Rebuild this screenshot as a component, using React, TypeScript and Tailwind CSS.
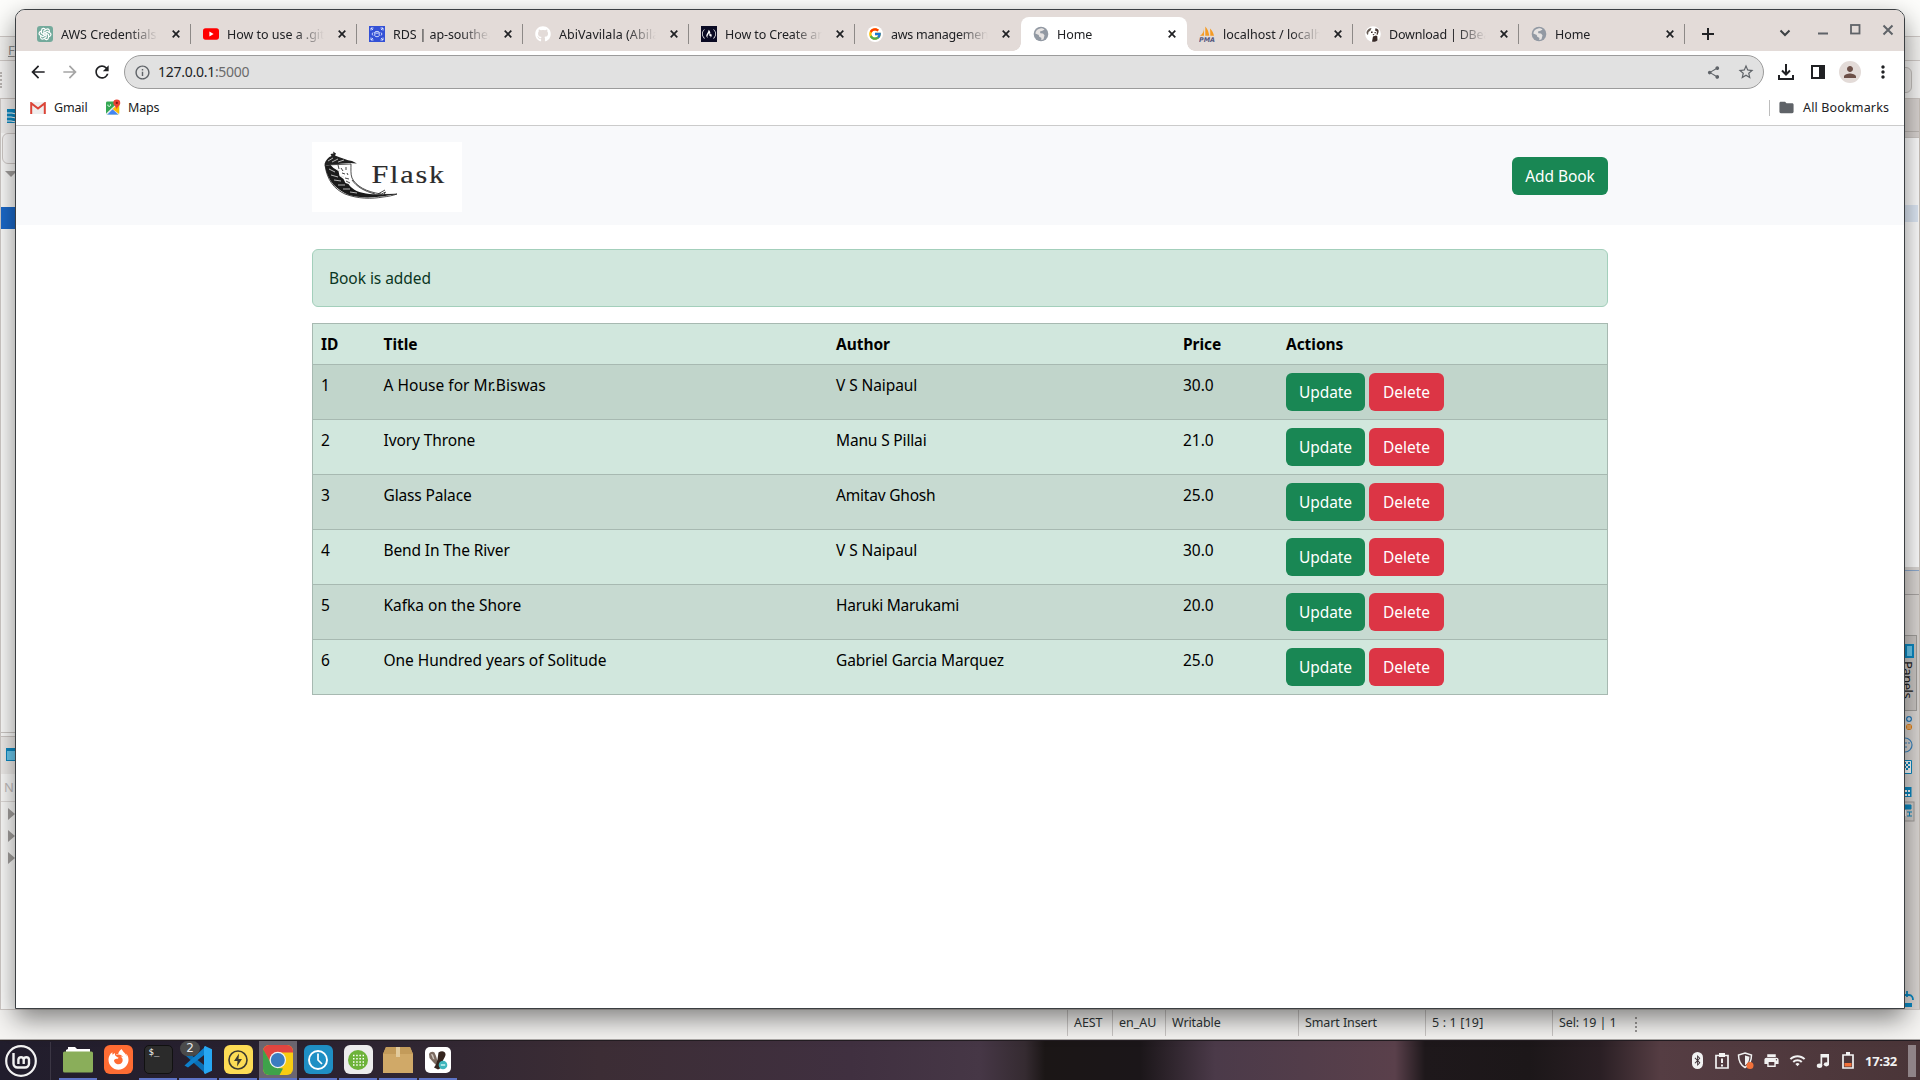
import React from "react";
import {
  MdArrowBack, MdArrowForward, MdRefresh, MdInfoOutline, MdShare, MdStarBorder,
  MdPerson, MdMoreVert, MdFolder, MdPrint, MdWifi,
} from "react-icons/md";
import { FcGoogle } from "react-icons/fc";
import { FaGithub, FaFreeCodeCamp, FaFirefoxBrowser, FaBluetoothB } from "react-icons/fa";
import { TbBrandOpenai } from "react-icons/tb";

/* ---------- favicons ---------- */

const OpenAi = () => (
  <span className="flex size-4 items-center justify-center rounded-[3px] bg-[#74aa9c] text-white"><TbBrandOpenai size={14} /></span>
);
const YouTube = () => (
  <svg viewBox="0 0 16 16" className="size-4"><rect y="2.3" width="16" height="11.4" rx="2.6" fill="#f00" /><path d="M6.4 5.6v4.8L10.6 8z" fill="#fff" /></svg>
);
const Rds = () => (
  <svg viewBox="0 0 16 16" className="size-4">
    <rect width="16" height="16" fill="#3350d6" />
    <g stroke="#dfe6ff" fill="none" strokeWidth=".9">
      <path d="M2 4.500V2h2.500M2 2l2 2M11.500 2H14v2.500M14 2l-2 2M2 11.500V14h2.500M2 14l2-2M11.500 14H14v-2.500M14 14l-2-2" />
      <ellipse cx="8" cy="6.300" rx="2.200" ry=".9" /><path d="M5.800 6.300v3.500c0 1.200 4.400 1.200 4.400 0V6.300M4 6.500L3 8l1 1.500M12 6.500L13 8l-1 1.500" />
    </g>
  </svg>
);
const GitHub = () => <FaGithub size={16} className="text-white" />;
const FreeCodeCamp = () => (
  <span className="flex size-4 items-center justify-center bg-[#0a0a23] text-white"><FaFreeCodeCamp size={14} /></span>
);
const Google = () => (
  <span className="flex size-4 items-center justify-center rounded-full bg-white"><FcGoogle size={14} /></span>
);
const Globe = () => (
  <svg viewBox="0 0 16 16" className="size-4">
    <circle cx="8" cy="8" r="7.300" fill="#9299a3" />
    <path d="M8.300 2.300c2 .2 4 1.400 4.900 3.300l-2.600.8-1.500 1.500-1.900-.4-1.700 1L3 7c.3-1 .9-2.100 1.700-2.900l2.500 1.300z M2.500 8.500l3.100 1.100 2.200-.1 1 1.600-1.600.9-.2 1.900C4.500 13.500 2.700 11.300 2.500 8.500z" fill="#9299a3" />
    <path d="M8 2.200c1.300 0 2.600.5 3.600 1.200L9.500 4.800 7 5.500l.3 1.700 2.700.3 1.500 1.800-1 3.900c-.8.400-1.600.6-2.500.6L8.500 12 6 10.500 5.800 9 2.300 7.500C2.500 5 4.500 2.600 8 2.200z" fill="#e6e3e2" />
  </svg>
);
const PhpMyAdmin = () => (
  <svg viewBox="0 0 16 16" className="size-4">
    <path d="M4.800 1.500C5 5 4 8 1 9.700h4zM6.300.5v9.200h4C9.600 6 8.600 2.800 6.300.5zM11 2.500c.3 2.600.3 5 .3 7.200H15C14.500 7 13 4.300 11 2.500z" fill="#f59b23" />
    <text x="0" y="15.800" fontSize="6.500" fontWeight="700" fontStyle="italic" fontFamily="DejaVu Sans, sans-serif" fill="#54587f" textLength="16" lengthAdjust="spacingAndGlyphs">PMA</text>
  </svg>
);
const Beaver = () => (
  <svg viewBox="0 0 16 16" className="size-4">
    <circle cx="8" cy="8" r="7.800" fill="#fff" />
    <path d="M1.500 6C2.500 3.500 4.500 2 6.500 2L5.500 4.500 3.500 6 3 9C2 8.500 1.500 7.500 1.500 6z" fill="#675c55" />
    <path d="M10.500 2.200c2.300.2 3.700 2 3 4L12.500 9l-1-.5.5-3-2-1z" fill="#4a3c38" />
    <path d="M8 10.500l3-1 1.300.8.2 4c-1.600 1.500-4 1.800-5.500 1.200z" fill="#382a28" />
    <path d="M6 5.500h1.600V7H6zM9.500 6h1.300v1.300H9.500zM7.500 8.300l2-.3-.9 1.500z" fill="#382a28" />
  </svg>
);

/* ---------- tab strip ---------- */

type Tab = { title: string; icon: React.FC; active?: boolean; track: string };
const tabs: Tab[] = [
  { title: "AWS Credentials", icon: OpenAi, track: "tracking-[0px]" },
  { title: "How to use a .gitignore", icon: YouTube, track: "tracking-[-0.03px]" },
  { title: "RDS | ap-southeast-2", icon: Rds, track: "tracking-[-0.1px]" },
  { title: "AbiVavilala (Abilash)", icon: GitHub, track: "tracking-[0.05px]" },
  { title: "How to Create and", icon: FreeCodeCamp, track: "tracking-[-0.1px]" },
  { title: "aws management", icon: Google, track: "tracking-[-0.25px]" },
  { title: "Home", icon: Globe, active: true, track: "tracking-[-0.1px]" },
  { title: "localhost / localhost", icon: PhpMyAdmin, track: "tracking-[0px]" },
  { title: "Download | DBeaver", icon: Beaver, track: "tracking-[-0.2px]" },
  { title: "Home", icon: Globe, track: "tracking-[-0.1px]" },
];

const CloseX = () => (
  <svg viewBox="0 0 8 8" className="size-2"><path d="M.7.7l6.600 6.600M7.300.7L.7 7.300" stroke="#202124" strokeWidth="1.700" /></svg>
);

const TabItem = ({ tab, separator }: { tab: Tab; separator: boolean }) => {
  const Icon = tab.icon;
  return (
    <div className={`relative flex h-[34px] w-[166px] shrink-0 items-center ${tab.active ? "rounded-t-lg bg-white" : ""}`}>
      {tab.active && (
        <>
          <span className="absolute bottom-0 -left-2 size-2 bg-[radial-gradient(circle_at_0_0,transparent_7.5px,#fff_8px)]" />
          <span className="absolute -right-2 bottom-0 size-2 bg-[radial-gradient(circle_at_100%_0,transparent_7.5px,#fff_8px)]" />
        </>
      )}
      <span className="ml-[12px] size-4 shrink-0"><Icon /></span>
      <span className={`mt-px ml-2 w-[97px] overflow-hidden whitespace-nowrap text-[12.5px] leading-4 text-[#202124] [mask-image:linear-gradient(90deg,#000_70%,transparent)] ${tab.track}`}>{tab.title}</span>
      <span className="ml-[14px]"><CloseX /></span>
      {separator && <span className="ml-auto h-5 w-px bg-[#8d8987]" />}
    </div>
  );
};

const TabStrip = () => (
  <div className="flex h-[41px] items-end bg-[#e3dbd8] pl-[9px]">
    {tabs.map((t, i) => (
      <TabItem key={i} tab={t} separator={!t.active && !tabs[i + 1]?.active} />
    ))}
    <svg viewBox="0 0 14 14" className="mb-[10px] ml-[16px] size-[14px]"><path d="M7 1v12M1 7h12" stroke="#202124" strokeWidth="2" /></svg>
    <div className="mb-[8px] ml-auto flex items-center pr-[10px]">
      <svg viewBox="0 0 12 12" className="mr-[26px] size-3"><path d="M1.500 3.500L6 8l4.500-4.500" fill="none" stroke="#3c4043" strokeWidth="2" /></svg>
      <svg viewBox="0 0 12 12" className="mr-[20px] size-3"><path d="M1 6.500h10" stroke="#5f6368" strokeWidth="2" /></svg>
      <svg viewBox="0 0 12 12" className="mb-2 mr-[21px] size-3"><rect x="2" y="2" width="8.500" height="8.500" fill="none" stroke="#5f6368" strokeWidth="1.800" /></svg>
      <svg viewBox="0 0 12 12" className="mb-[6px] size-3"><path d="M1.500 1.500l9 9M10.500 1.500l-9 9" stroke="#5f6368" strokeWidth="2" /></svg>
    </div>
  </div>
);

/* ---------- toolbar and bookmarks ---------- */

const Toolbar = () => (
  <div className="flex h-[42px] items-center pl-[12px]">
    <MdArrowBack size={20} className="-mt-px text-[#202124]" />
    <MdArrowForward size={20} className="-mt-px ml-3 text-[#a5a5a5]" />
    <MdRefresh size={20} className="-mt-px ml-3 text-[#202124]" />
    <div className="ml-3 flex h-[34px] w-[1640px] items-center rounded-full border border-[#9b9b9b] bg-[#e1e1e1] pl-[9px] pr-[8px]">
      <MdInfoOutline size={17} className="text-[#5f6368]" />
      <span className="ml-[7px] text-[14px] leading-4 tracking-[-0.27px] text-[#202124]">127.0.0.1<span className="text-[#6b6b6b]">:5000</span></span>
      <MdShare size={15} className="ml-auto text-[#5f6368]" />
      <MdStarBorder size={18} className="ml-[16px] text-[#5f6368]" />
    </div>
    <svg viewBox="0 0 16 16" className="ml-[14px] size-4"><path d="M8 0v10M4 6.500l4 4 4-4M1 11v4h14v-4" fill="none" stroke="#202124" strokeWidth="2" /></svg>
    <svg viewBox="0 0 14 14" className="-mt-px ml-[17px] size-[14px]"><rect x="1" y="1" width="12" height="12" fill="none" stroke="#202124" strokeWidth="2" /><path d="M8 1h5v12H8z" fill="#202124" /></svg>
    <span className="ml-[14px] flex size-[22px] items-center justify-center rounded-full bg-[#e3dbd8]"><MdPerson size={18} className="text-[#6d5048]" /></span>
    <MdMoreVert size={20} className="-mt-px ml-[12px] text-[#202124]" />
  </div>
);

const BookmarkBar = () => (
  <div className="flex h-[33px] items-center border-b border-[#cbcbcb] pb-[3px] pl-[14px] text-[12.5px] leading-4 text-[#202124]">
    <svg viewBox="0 0 16 12" className="h-3 w-4"><path d="M1 0h14v12H1z" fill="#eee" /><path d="M1.200 12V1.200L8 6.500l6.800-5.300V12" fill="none" stroke="#db4437" strokeWidth="2" /></svg>
    <span className="ml-2 w-[52px] tracking-[-0.15px]">Gmail</span>
    <svg viewBox="0 0 16 16" className="-mt-0.5 h-4 w-[15px]">
      <rect y="2" width="14" height="14" rx="1.500" fill="#34a853" /><path d="M0 15L13 3l1 1v12H1z" fill="#e8eaed" /><path d="M1.500 16L7 10.500l6 5.500z" fill="#4285f4" /><path d="M7 10l6-5 1 1v9.500z" fill="#fbbc04" />
      <path d="M11.500 0A3.700 3.700 0 0 0 7.800 3.700c0 2.800 3.200 3.500 3.700 7 .5-3.500 3.700-4.200 3.700-7A3.700 3.700 0 0 0 11.500 0z" fill="#ea4335" /><circle cx="11.500" cy="3.700" r="1.200" fill="#7c1c14" /><path d="M2 5.500a1.500 1.500 0 1 0 2.600-.6" fill="none" stroke="#fff" />
    </svg>
    <span className="ml-[7px] tracking-[-0.15px]">Maps</span>
    <span className="ml-auto h-4 w-px bg-[#bdbdbd]" />
    <MdFolder size={17} className="ml-[8px] text-[#5f6368]" />
    <span className="ml-[8px] w-[101px] whitespace-nowrap tracking-[0.15px]">All Bookmarks</span>
  </div>
);

/* ---------- page ---------- */

const FlaskLogo = () => (
  <svg viewBox="0 0 150 70" className="h-[70px] w-[150px] bg-white">
    <path d="M13 23C15 38 22 47 33 52c13 5 27 5 38 3 5-.5 10-1.500 14-3-6 .5-9 .5-13 .4l1.500-2.400-4 2C54 50 44 44 40 36c-1.500-4-1-9-1-14z" fill="#fff" stroke="#222" strokeWidth=".8" />
    <path d="M13 24C16 40 25 48 37 53c9 3 24 3 36 1l11-2c-8 0-20 1-30-.5C44 50 39 46 36.500 42l-3-1-2-4-4-3-1-5-5-3-3-3z" fill="#1a1a1a" />
    <path d="M12.500 22c1-4 4-7 7-8l-1-2 3-.500-.5-2 3 2-1 2c6 2 12 5 17 5.500l5 2.500-8-.5c-7 1-17 1-24 3z" fill="#222" />
    <path d="M16 19l5-3M20 20l6-3M26 20l6-2M17 27l6 3M19 33l7 2M22 38l7 1M26 43l7 0M31 47l7 0M38 50l7 1M24 27l4 2M29 34l3 1" stroke="#ddd" strokeWidth=".8" />
    <path d="M26 23l1 4M29 26l2 3M34 25v3M30 31l3 1M35 31l1 2M33 36l4 1M34 39l4 2M40 38c5 7 12 11 23 14M66 52l7-4" stroke="#333" strokeWidth=".9" fill="none" />
    <text x="59.500" y="40.500" fontFamily="Liberation Serif, serif" fontSize="25" fill="#2b2b2b" stroke="#2b2b2b" strokeWidth=".15" letterSpacing="1.500" textLength="74.500" lengthAdjust="spacingAndGlyphs">Flask</text>
  </svg>
);

type Cell = [text: string, tracking: string];
const books: { id: string; title: Cell; author: Cell; price: string }[] = [
  { id: "1", title: ["A House for Mr.Biswas", "tracking-[0.03px]"], author: ["V S Naipaul", "tracking-[-0.08px]"], price: "30.0" },
  { id: "2", title: ["Ivory Throne", "tracking-[-0.1px]"], author: ["Manu S Pillai", "tracking-[-0.16px]"], price: "21.0" },
  { id: "3", title: ["Glass Palace", "tracking-[-0.15px]"], author: ["Amitav Ghosh", "tracking-[-0.2px]"], price: "25.0" },
  { id: "4", title: ["Bend In The River", "tracking-[-0.13px]"], author: ["V S Naipaul", "tracking-[-0.08px]"], price: "30.0" },
  { id: "5", title: ["Kafka on the Shore", "tracking-[-0.01px]"], author: ["Haruki Marukami", "tracking-[-0.25px]"], price: "20.0" },
  { id: "6", title: ["One Hundred years of Solitude", "tracking-[-0.05px]"], author: ["Gabriel Garcia Marquez", "tracking-[-0.13px]"], price: "25.0" },
];
const rowTint = (i: number) => (i === 0 ? "bg-[#c1d5cb]" : i % 2 === 0 ? "bg-[#c7dad1]" : "bg-[#d1e7dd]");

const Page = () => (
  <div className="flex-1 bg-white text-[15.5px] leading-6 tracking-[-0.05px]">
    <nav className="h-[99px] bg-[#f8f9fb]">
      <div className="mx-auto flex w-[1296px] items-start justify-between pt-4">
        <FlaskLogo />
        <button className="mt-[15px] h-[38px] w-24 rounded-md bg-[#198754] text-white">Add Book</button>
      </div>
    </nav>
    <main className="mx-auto w-[1296px] pt-6">
      <div className="h-[58px] rounded-md border border-[#a3cfbb] bg-[#d1e7dd] p-4 text-[#0a3622]">Book is added</div>
      <div className="mt-4 border border-b-0 border-[#a7b9b1] text-black">
        <div className="grid h-[41px] grid-cols-[62.5px_452.500px_347px_103px_1fr] border-b border-[#a7b9b1] bg-[#d1e7dd] pt-2 font-bold *:pl-2">
          <span>ID</span><span>Title</span><span>Author</span><span>Price</span><span>Actions</span>
        </div>
        {books.map((b, i) => (
          <div key={b.id} className={`grid h-[55px] grid-cols-[62.5px_452.500px_347px_103px_1fr] border-b border-[#a7b9b1] pt-2 *:pl-2 ${rowTint(i)}`}>
            <span>{b.id}</span>
            <span className={b.title[1]}>{b.title[0]}</span>
            <span className={b.author[1]}>{b.author[0]}</span>
            <span>{b.price}</span>
            <span className="flex gap-1">
              <button className="h-[38px] w-[79px] rounded-md bg-[#198754] text-white">Update</button>
              <button className="h-[38px] w-[75px] rounded-md bg-[#dc3545] text-white">Delete</button>
            </span>
          </div>
        ))}
      </div>
    </main>
  </div>
);

const BrowserWindow = () => (
  <div className="absolute top-[9px] left-[15px] flex h-[1000px] w-[1890px] flex-col overflow-hidden rounded-t-[10px] border border-[#3b3f42] bg-white shadow-[0_10px_26px_rgba(0,0,0,0.48)]">
    <TabStrip />
    <Toolbar />
    <BookmarkBar />
    <Page />
  </div>
);

/* ---------- database client behind the browser ---------- */

const Arrow = () => <svg viewBox="0 0 7 12" className="ml-[7px] h-3 w-[7px]"><path d="M0 0l7 6-7 6z" fill="#a3a09e" /></svg>;

const LeftEdge = () => (
  <div className="flex w-4 flex-col overflow-hidden border-l border-[#d0cac7]">
    <div className="h-[34px] bg-[#f4f2f1] pt-[9px]">
      <svg viewBox="0 0 16 16" className="ml-[5px] size-4"><path d="M1 1h14v14H1z" fill="#0b8ac4" /><path d="M0 5h6l4 1h6M0 9h5l5 1h6M0 13h5l5 1h6" stroke="#fff" strokeWidth="1.200" fill="none" /></svg>
    </div>
    <div className="mx-px h-[31px] w-8 rounded-md border border-[#d0cac7] bg-[#fbfafa]" />
    <svg viewBox="0 0 12 6" className="mt-[7px] ml-1 h-[6px] w-3"><path d="M0 0h12L6 6z" fill="#a3a09e" /></svg>
    <div className="mt-[30px] h-[22px] shrink-0 bg-[#1b6acb]" />
    <div className="h-[504px] shrink-0 border-b border-[#cdc8c5]" />
    <div className="mt-[3px] h-[38px] shrink-0 border-t border-[#d0cac7] bg-[#f0eeec] pt-[11px]">
      <div className="ml-[5px] h-[13px] w-4 border border-t-[3px] border-[#0b8ac4] bg-[#6ccbf0]" />
    </div>
    <div className="h-[28px] shrink-0 border-b border-[#e0dcda] pl-[3px] text-[13px] leading-[27px] text-[#c4c0be]">N</div>
    <div className="mt-[6px] flex flex-col gap-[10px]"><Arrow /><Arrow /><Arrow /></div>
  </div>
);

const RightEdge = () => (
  <div className="ml-auto flex w-4 flex-col border-r border-[#c9c2ba]">
    <div className="h-[39px] border-b border-[#cdc8c5] bg-[#d9d4d1] pt-[32px]"><div className="h-px bg-[#bdb8b4]" /></div>
    <div className="h-[429px] bg-[#fefefe] pt-[67px]"><div className="mr-px h-[17px] bg-[#dfe9f6]" /></div>
    <div className="flex flex-1 flex-col bg-[#dcd8d5] pt-[3px]">
      <div className="h-px bg-[#8fabcf]" />
      <div className="mt-[23px] h-px bg-[#aaa6a4]" />
      <div className="mt-[40px] flex h-[76px] w-[13px] flex-col overflow-hidden border border-[#a19e9b] bg-[#cbc7c4] pt-2">
        <div className="h-[14px] w-[9px] shrink-0 border-2 border-[#0b8ac4] bg-[#6ccbf0]" />
        <span className="mt-[3px] ml-[-9px] text-[13px] leading-4 tracking-[-0.5px] text-[#222] [writing-mode:vertical-rl]">Panels</span>
      </div>
      <svg viewBox="0 0 13 110" className="mt-1 -ml-px h-[110px] w-[13px]">
        <circle cx="6" cy="4" r="3" fill="#2b7fbe" /><path d="M4 4h4M6 2v4" stroke="#fff" />
        <circle cx="6" cy="12" r="3" fill="#e8800e" /><path d="M5 10v4M7 10v4" stroke="#fff" strokeWidth=".7" />
        <circle cx="2" cy="30" r="7" fill="none" stroke="#3a86c2" strokeWidth="1.200" /><path d="M3 27v2M3 31v2M6 27v2" stroke="#3a86c2" />
        <path d="M-1 45.500h9.500v13H-1z" fill="#fff" stroke="#0b8ac4" /><path d="M1 47h2v2H1zM5 47h2v2H5zM3 49h2v2H3zM1 51h2v2H1zM5 51h2v2H5zM3 53h2v2H3z" fill="#0b8ac4" />
        <path d="M-1 72h9.500v10H-1z" fill="#0b8ac4" /><path d="M1 75h3v2H1zM5 75h2v2H5zM1 79h3v2H1zM5 79h2v2H5z" fill="#fff" /><path d="M0 71v11" stroke="#e8800e" />
        <rect x="-2" y="87" width="13" height="19" fill="#d2cecb" stroke="#a19e9b" /><path d="M-1 90h9v4H-1zM4 97h5M4 101h5M6.500 97v4" fill="#0b8ac4" stroke="#0b8ac4" /><path d="M-1 95h4v6H-1z" fill="#fff" />
      </svg>
      <svg viewBox="0 0 12 18" className="mt-auto mb-px h-[18px] w-3"><path d="M1 5h4c3 0 4 3 4 5M3 1v6" fill="none" stroke="#0b8ac4" strokeWidth="1.800" /><path d="M0 13h8v4H0z" fill="#0b8ac4" /></svg>
    </div>
  </div>
);

const StatusCell = ({ className, children }: { className: string; children: React.ReactNode }) => (
  <span className={`flex h-[26px] items-center border-l border-[#c9c6c4] pl-[6px] ${className}`}>{children}</span>
);

const DatabaseClient = () => (
  <div className="flex h-[1040px] flex-col bg-[#fdfdfc]">
    <div className="h-[37px] shrink-0 border-b border-[#d0cac7] bg-[#fdfdfb]" />
    <div className="h-6 shrink-0 border-b border-[#d0cac7] bg-[#f4f3f1] pl-2 text-[13px] leading-[26px] text-[#8f8d8b] underline">F</div>
    <div className="flex h-[38px] shrink-0 items-center justify-between border-b border-[#cdc6c2] bg-[#f6f5f4]">
      <span className="h-4 border-l-2 border-dotted border-[#bab6b3]" />
      <span className="mr-2 h-[26px] w-8 rounded-md border border-[#c4c0bd] bg-[#ebe9e7]" />
    </div>
    <div className="flex flex-1"><LeftEdge /><RightEdge /></div>
    <div className="flex h-[31px] shrink-0 items-start border-t border-b border-t-[#d0cac7] border-b-[#aaa7a5] bg-[#f5f4f2] pl-[1067px] text-[12.5px] tracking-[-0.1px] text-[#2e3436]">
      <StatusCell className="w-[45px]">AEST</StatusCell>
      <StatusCell className="w-[53px] tracking-[0px]">en_AU</StatusCell>
      <StatusCell className="w-[133px]">Writable</StatusCell>
      <StatusCell className="w-[127px]">Smart Insert</StatusCell>
      <StatusCell className="w-[127px] tracking-[0.15px]">5 : 1 [19]</StatusCell>
      <StatusCell className="w-[83px]">Sel: 19 | 1</StatusCell>
      <span className="mt-[7px] h-[15px] border-l-2 border-dotted border-[#9b9896]" />
    </div>
  </div>
);

/* ---------- taskbar ---------- */

const Tile = ({ className, children }: { className: string; children?: React.ReactNode }) => (
  <span className={`flex size-[29px] items-center justify-center rounded-[6px] ${className}`}>{children}</span>
);

const FolderApp = () => (
  <svg viewBox="0 0 30 26" className="h-[26px] w-[30px]"><path d="M3 8V3l2-1V0h7l2 2h13v6z" fill="#fff" /><rect y="4.500" width="30" height="21" rx="1.500" fill="#8aae5a" /></svg>
);
const CodeApp = () => (
  <span className="relative flex items-center">
    <svg viewBox="0 0 30 30" className="size-[30px]">
      <path d="M1.500 9.500L5 7.500l18 14V29z" fill="#0a6fb5" /><path d="M1.500 20.500L5 22.500 23 8.500V1z" fill="#0e80cc" /><path d="M22 1l7 3.300v21.400L22 29l-1-1V2z" fill="#27a7f2" />
    </svg>
    <span className="absolute -top-[4px] -left-[3px] flex h-[15px] w-5 items-center justify-center rounded-full bg-[#4b4b4b] font-['DejaVu_Sans',sans-serif] text-[12px] text-[#e8e8e8]">2</span>
  </span>
);
const ChromeApp = () => (
  <svg viewBox="0 0 30 30" className="size-[30px]">
    <defs><clipPath id="chromeTile"><rect width="30" height="30" rx="6" /></clipPath></defs>
    <g clipPath="url(#chromeTile)">
      <rect width="30" height="30" fill="#f8cc12" /><path d="M0 0h30v7.500H15L8.500 19 0 5z" fill="#e24540" /><path d="M0 4l8.500 15L15 23l5 .5L16.500 30H0z" fill="#3fa24a" />
    </g>
    <circle cx="14.800" cy="15" r="8.300" fill="#f3f3f3" /><circle cx="14.800" cy="15" r="7" fill="#3c7cc0" />
  </svg>
);
const BoxApp = () => (
  <svg viewBox="0 0 30 26" className="h-[26px] w-[30px]"><path d="M3 0h24l3 7v19H0V7z" fill="#d0a968" /><path d="M3 0h24l3 7H0z" fill="#c39b5a" /><path d="M13 0h4v10h-4z" fill="#e2cb9d" /></svg>
);

const apps: { id: string; node: React.ReactNode; running?: boolean; focused?: boolean }[] = [
  { id: "files", node: <FolderApp />, running: true },
  { id: "firefox", node: <Tile className="bg-[#ff6c33] text-white"><FaFirefoxBrowser size={21} /></Tile> },
  { id: "terminal", node: <span className="flex size-[29px] rounded-[5px] border border-[#111] bg-[#2b2b2b] pl-1 font-['DejaVu_Sans_Mono',monospace] text-[9px] leading-[13px] text-white">$_</span>, running: true },
  { id: "code", node: <CodeApp />, running: true },
  { id: "power", node: <Tile className="bg-[#fddc55]"><svg viewBox="0 0 22 22" className="size-[22px]"><circle cx="11" cy="11" r="9" fill="none" stroke="#3d3a30" strokeWidth="1.600" /><path d="M12 4.500L7 12h3.500L10 17.500 15 10h-3.500z" fill="#3d3a30" /></svg></Tile>, running: true },
  { id: "chrome", node: <ChromeApp />, running: true, focused: true },
  { id: "timeshift", node: <Tile className="bg-[#1f8fc4]"><svg viewBox="0 0 22 22" className="size-[22px]"><circle cx="11" cy="11" r="9" fill="none" stroke="#fff" strokeWidth="1.900" /><path d="M11 4.500V11l4 4" fill="none" stroke="#fff" strokeWidth="1.700" /></svg></Tile>, running: true },
  { id: "grid", node: <Tile className="bg-[#ececec]"><svg viewBox="0 0 20 20" className="size-5"><circle cx="10" cy="10" r="10" fill="#6db33a" /><path d="M5 5.500h11M5 8.700h11M5 11.900h11M5 15.100h11" stroke="#fff" strokeWidth="1.500" strokeDasharray="1.500 1.700" /></svg></Tile>, running: true },
  { id: "box", node: <BoxApp />, running: true },
  { id: "dbeaver", node: <span className="flex size-[26px] items-center justify-center rounded-[5px] bg-white">
    <svg viewBox="0 0 26 26" className="size-[26px]">
      <path d="M4 7c1-2.500 4-3 5.500-1.500L11 9l1.500 5-1 4.500L8 15 4.500 11z" fill="#7c6b61" /><path d="M6 7l2 .5 1.500 5L8 12z" fill="#cfc6c0" />
      <path d="M13.500 5.500c3-2 6.500-1.500 7 1.500.3 3-2.500 5-3 8l-1.500 6-3 1.500-4-2 2-3 1.500-5z" fill="#35251f" />
      <circle cx="18" cy="18" r="4.300" fill="#3fb6bd" /><path d="M15.800 17h4.400v2h-4.400z" fill="#a8e3e5" />
    </svg></span>, running: true },
];

const Tray = () => (
  <div className="ml-auto flex items-center text-[#f2f2f2]">
    <span className="flex h-[17px] w-[11px] items-center justify-center rounded-full bg-[#f2f2f2] text-[#3c2f35]"><FaBluetoothB size={11} /></span>
    <svg viewBox="0 0 14 16" className="ml-[12px] h-4 w-[14px]"><path d="M1 2.500h12v12.500H1z" fill="none" stroke="currentColor" strokeWidth="1.700" /><path d="M4 0h6v4H4z" fill="currentColor" /><path d="M7 5.500v4.500M7 11.500v2" stroke="currentColor" strokeWidth="2" /></svg>
    <svg viewBox="0 0 17 17" className="ml-[8px] size-[17px]"><path d="M8 1l6.500 2c0 6-2 10-6.500 12.500C3.500 13 1.500 9 1.500 3z" fill="none" stroke="currentColor" strokeWidth="1.500" /><path d="M8 3.500l4.500 1.300C12.300 9 11 11.500 8 13.500z" fill="currentColor" /><circle cx="13" cy="13.500" r="3.500" fill="#f2713a" /></svg>
    <MdPrint size={17} className="ml-[9px]" />
    <MdWifi size={17} className="ml-[9px]" />
    <svg viewBox="0 0 14 15" className="ml-[10px] h-[15px] w-[14px]"><path d="M4.500 1H13v10.500h-1.800V4.500h-5v8.500H4.500z" fill="currentColor" /><ellipse cx="3.500" cy="12.700" rx="2.700" ry="2.200" fill="currentColor" /><ellipse cx="10.400" cy="11.300" rx="2.600" ry="2.100" fill="currentColor" /></svg>
    <svg viewBox="0 0 12 17" className="ml-[12px] h-[17px] w-3"><path d="M1 3h10v13H1z" fill="none" stroke="currentColor" strokeWidth="1.700" /><path d="M4 0h4v3H4z" fill="currentColor" /><path d="M2.500 11h7v3.500h-7z" fill="#f2713a" /></svg>
    <span className="mt-px ml-[11px] w-[35px] whitespace-nowrap text-[13px] leading-4 font-bold tracking-[-0.3px]">17:32</span>
    <span className="mr-1 ml-2 h-8 w-2 bg-[#8f8387]" />
  </div>
);

const Taskbar = () => (
  <div className="flex h-10 items-center border-t border-[#231d22] bg-[linear-gradient(90deg,#211d2c_0,#2a2230_300px,#332833_460px,#3c2d35_600px,#403040_850px,#463746_980px,#352b31_1025px,#1b1616_1045px,#1b1619_1140px,#4b3a49_1215px,#5a404b_1395px,#1e181b_1425px,#1c1719_1530px,#2a1f24_1600px,#553d43_1660px,#4a3538_1920px)]">
    <svg viewBox="0 0 32 32" className="ml-[5px] size-8">
      <circle cx="16" cy="16" r="14.800" fill="none" stroke="#f2f2f2" strokeWidth="2.200" />
      <path d="M8.500 8v10.500a4 4 0 0 0 4 4h7.500a4 4 0 0 0 4-4v-4a2.700 2.700 0 0 0-5.300 0v4.500M18.700 14.500a2.700 2.700 0 0 0-5.300 0v4.500" fill="none" stroke="#f2f2f2" strokeWidth="2.400" />
    </svg>
    <span className="ml-[13px] h-[38px] w-px bg-[#3b3644]" />
    <div className="ml-2 flex gap-[2px]">
      {apps.map((a) => (
        <div key={a.id} className={`flex h-[39px] w-[38px] items-center justify-center border-b-2 ${a.running ? "border-[#5e74c6]" : "border-transparent"} ${a.focused ? "bg-[#6c6670]" : ""}`}>{a.node}</div>
      ))}
    </div>
    <Tray />
  </div>
);

export default function App() {
  return (
    <div className="relative h-[1080px] w-[1920px] overflow-hidden font-['Noto_Sans',sans-serif]">
      <DatabaseClient />
      <BrowserWindow />
      <Taskbar />
    </div>
  );
}
